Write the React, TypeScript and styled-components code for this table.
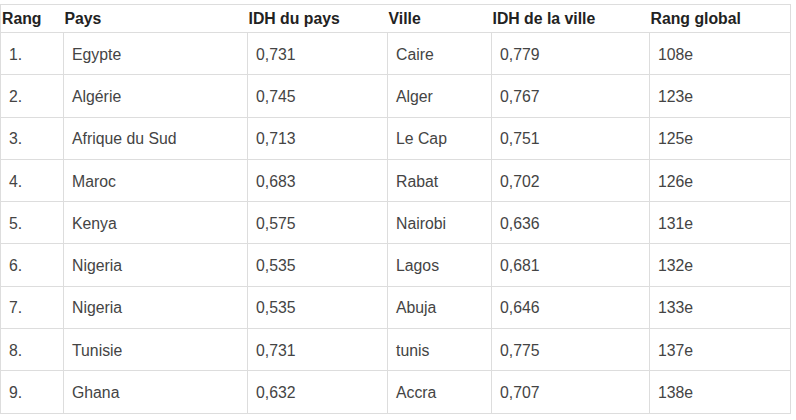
import React from "react";
import styled, { createGlobalStyle } from "styled-components";

const Global = createGlobalStyle`
  html, body { margin: 0; padding: 0; background: #ffffff; }
  body { font-family: "Liberation Sans", Arial, sans-serif; }
`;

const Page = styled.div`
  padding-top: 4px;
`;

const Table = styled.table`
  border-collapse: collapse;
  table-layout: fixed;
  width: 790px;
  border: 1px solid #dddddd;
  font-family: "Liberation Sans", Arial, sans-serif;
  font-size: 15.8px;
`;

const HeadRow = styled.tr`
  height: 28px;
`;

const Th = styled.th`
  text-align: left;
  font-weight: bold;
  color: #222222;
  padding: 0 1px;
  border-bottom: 1px solid #dddddd;
  vertical-align: middle;
  white-space: nowrap;
`;

const Row = styled.tr`
  height: 42.3px;
`;

const Td = styled.td`
  color: #444444;
  padding: 2px 8px 0;
  border: 1px solid #dddddd;
  vertical-align: middle;
  white-space: nowrap;
`;

const cols = [63, 184, 140, 104, 158, 141];

const headers = ["Rang", "Pays", "IDH du pays", "Ville", "IDH de la ville", "Rang global"];

const rows: string[][] = [
  ["1.", "Egypte", "0,731", "Caire", "0,779", "108e"],
  ["2.", "Algérie", "0,745", "Alger", "0,767", "123e"],
  ["3.", "Afrique du Sud", "0,713", "Le Cap", "0,751", "125e"],
  ["4.", "Maroc", "0,683", "Rabat", "0,702", "126e"],
  ["5.", "Kenya", "0,575", "Nairobi", "0,636", "131e"],
  ["6.", "Nigeria", "0,535", "Lagos", "0,681", "132e"],
  ["7.", "Nigeria", "0,535", "Abuja", "0,646", "133e"],
  ["8.", "Tunisie", "0,731", "tunis", "0,775", "137e"],
  ["9.", "Ghana", "0,632", "Accra", "0,707", "138e"],
];

export default function App() {
  return (
    <Page>
      <Global />
      <Table>
        <colgroup>
          {cols.map((w, i) => (
            <col key={i} style={{ width: w }} />
          ))}
        </colgroup>
        <thead>
          <HeadRow>
            {headers.map((h) => (
              <Th key={h}>{h}</Th>
            ))}
          </HeadRow>
        </thead>
        <tbody>
          {rows.map((r, i) => (
            <Row key={i}>
              {r.map((c, j) => (
                <Td key={j}>{c}</Td>
              ))}
            </Row>
          ))}
        </tbody>
      </Table>
    </Page>
  );
}
